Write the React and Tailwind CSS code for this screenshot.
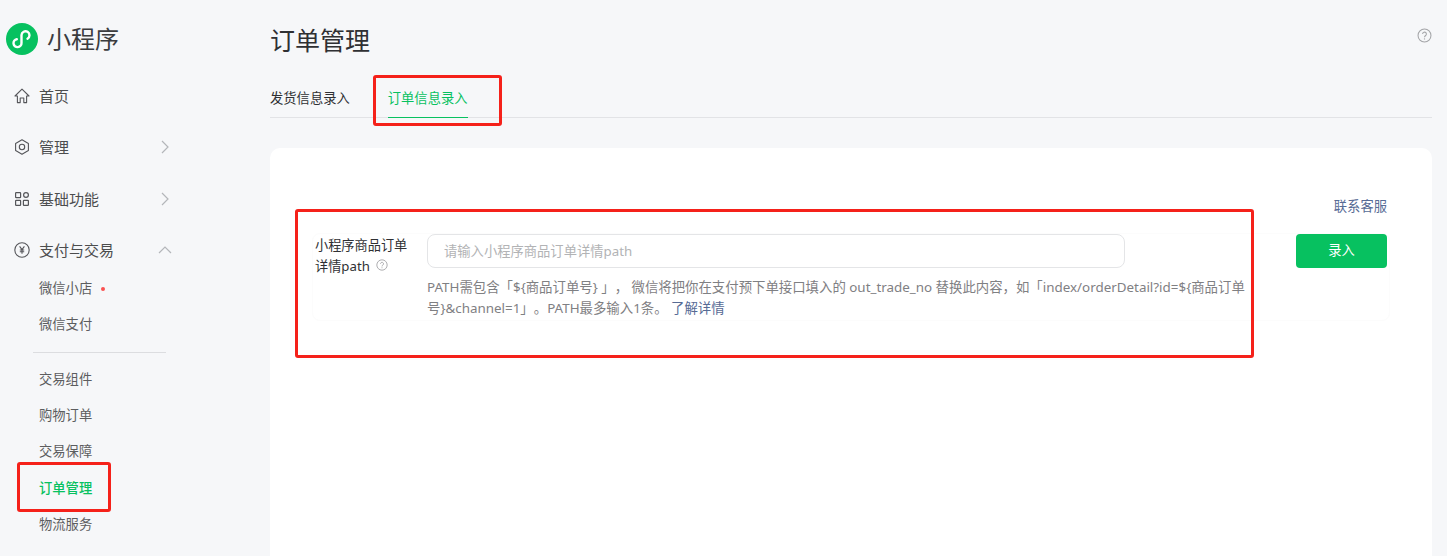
const HelpIcon = ({ className }) => (
  <svg viewBox="0 0 16 16" fill="none" stroke="currentColor" className={className}>
    <circle cx="8" cy="8" r="6.9" strokeWidth="1.1" />
    <path d="M6 6.4a2 2 0 1 1 3.2 1.6c-.8.6-1.2.9-1.2 1.9" strokeWidth="1.1" />
    <circle cx="8" cy="11.6" r=".7" fill="currentColor" stroke="none" />
  </svg>
);

const HomeIcon = () => (
  <svg viewBox="0 0 16 16" fill="none" stroke="currentColor" strokeWidth="1.1" className="w-4 h-4">
    <path d="M1 8 8 1.2 15 8h-2.4v6.6H9.8V10H6.2v4.6H3.4V8Z" strokeLinejoin="round" />
  </svg>
);

const ManageIcon = () => (
  <svg viewBox="0 0 16 16" fill="none" stroke="currentColor" strokeWidth="1.1" className="w-4 h-4">
    <path d="M8 .8 14.4 4.4v7.2L8 15.2 1.6 11.6V4.4Z" strokeLinejoin="round" />
    <circle cx="8" cy="8" r="2.7" />
  </svg>
);

const GridIcon = () => (
  <svg viewBox="0 0 16 16" fill="none" stroke="currentColor" strokeWidth="1.2" className="w-4 h-4">
    <rect x="1.6" y="1.6" width="5" height="5" rx=".6" />
    <circle cx="12" cy="4" r="2.4" />
    <rect x="1.6" y="9.4" width="5" height="5" rx=".6" />
    <rect x="9.4" y="9.4" width="5" height="5" rx=".6" />
  </svg>
);

const PayIcon = () => (
  <svg viewBox="0 0 16 16" fill="none" stroke="currentColor" strokeWidth="1.1" className="w-4 h-4">
    <circle cx="8" cy="8" r="7.2" />
    <path d="M5.6 4.4 8 7.6l2.4-3.2M8 7.6v4.2M5.8 8h4.4M5.8 9.8h4.4" />
  </svg>
);

const Chevron = ({ up }) => (
  <svg viewBox="0 0 14 14" fill="none" stroke="#b4b6ba" strokeWidth="1.2" className="w-[14px] h-[14px]">
    <path d={up ? "M1 10 7 4l6 6" : "M4 1l6 6-6 6"} />
  </svg>
);

const Logo = () => (
  <svg viewBox="0 0 32 32" className="w-8 h-8">
    <circle cx="16" cy="16" r="16" fill="#07c160" />
    <path
      d="M10.8 16.2A4 4 0 1 0 15.5 20V12A4 4 0 1 1 21.5 15.7"
      fill="none"
      stroke="#fff"
      strokeWidth="2.4"
      strokeLinecap="round"
    />
  </svg>
);

const MainItem = ({ icon, label, open, chevron }) => (
  <div className="h-[51.5px] flex items-center pl-[14px] pr-[98px] text-[15px] text-[#4c4d4e]">
    <span className="w-[25px] text-[#55565a]">{icon}</span>
    <span className="flex-1">{label}</span>
    {chevron && <Chevron up={open} />}
  </div>
);

const SubItem = ({ label, active, dot }) => (
  <div className={`h-[36.3px] flex items-center pl-[39px] text-[13.3px] ${active ? "text-[#07c160] font-medium" : "text-[#5c5d5f]"}`}>
    {label}
    {dot && <span className="ml-[9px] w-1 h-1 rounded-full bg-[#fa5151]" />}
  </div>
);

const RedBox = ({ className }) => (
  <div className={`absolute border-[3px] border-[#f5211a] rounded-[3px] pointer-events-none ${className}`} />
);

export default function App() {
  return (
    <div className="relative h-[556px] overflow-hidden flex bg-[#f6f7f9] font-['Noto_Sans','Noto_Sans_CJK_SC',sans-serif]">
      <aside className="w-[270px] shrink-0">
        <div className="h-[70px] pt-[23px] pl-[6px] flex items-start gap-[9px]">
          <Logo />
          <span className="text-[24px] leading-[32px] text-[#3b3c3e]">小程序</span>
        </div>
        <MainItem icon={<HomeIcon />} label="首页" />
        <MainItem icon={<ManageIcon />} label="管理" chevron />
        <MainItem icon={<GridIcon />} label="基础功能" chevron />
        <MainItem icon={<PayIcon />} label="支付与交易" chevron open />
        <div className="-mt-[5px]">
          <SubItem label="微信小店" dot />
          <SubItem label="微信支付" />
          <div className="mx-[33px] w-[133px] mt-[8px] mb-[9px] border-t border-[#dcdde0]" />
          <SubItem label="交易组件" />
          <SubItem label="购物订单" />
          <SubItem label="交易保障" />
          <SubItem label="订单管理" active />
          <SubItem label="物流服务" />
        </div>
      </aside>

      <main className="flex-1 pr-[15px]">
        <div className="flex justify-between">
          <h1 className="pt-[21px] text-[25px] leading-[38px] font-normal text-[#2f3033]">订单管理</h1>
          <HelpIcon className="w-[15px] h-[15px] mt-[28px] text-[#a3a4a7]" />
        </div>
        <div className="mt-[20px] h-[39px] flex gap-[38px] border-b border-[#e2e3e6] text-[13.3px]">
          <div className="leading-[38px] text-[#2f3033]">发货信息录入</div>
          <div className="h-[39px] leading-[38px] text-[#07c160] border-b border-[#07c160]">订单信息录入</div>
        </div>

        <section className="mt-[30px] h-[420px] bg-white rounded-t-[10px] pt-[49px] pr-[45px] pl-[45px]">
          <div className="text-right text-[13.3px] leading-[18px] text-[#576b95]">联系客服</div>
          <div className="mt-[18px] -mx-[3px] pl-[2px] pr-[2px] pb-[1px] flex rounded-lg border border-[#fcfcfc]">
            <div className="w-[112px] shrink-0 pt-[1px] text-[13.2px] leading-[21px] text-[#2f3033]">
              <div>小程序商品订单</div>
              <div className="flex items-center">
                详情path
                <HelpIcon className="ml-[6px] w-[12px] h-[12px] -mt-[3px] text-[#9b9c9f]" />
              </div>
            </div>
            <div className="flex-1 min-w-0">
              <div className="flex items-start justify-between">
                <input
                  readOnly
                  placeholder="请输入小程序商品订单详情path"
                  className="w-[698px] h-[34px] px-4 rounded-[8px] border border-[#e4e5e7] bg-white text-[13.3px] placeholder:text-[#b2b3b5] outline-none"
                />
                <button className="w-[91px] h-[34px] rounded-[4px] bg-[#07c160] text-white text-[13.3px]">录入</button>
              </div>
              <p className="mt-[9px] w-[820px] text-[13.4px] leading-[21px] text-[#7f8083] [text-spacing-trim:space-all]">
                PATH需包含「${"{"}商品订单号} 」， 微信将把你在支付预下单接口填入的 out_trade_no 替换此内容，如「index/orderDetail?id=${"{"}商品订单号}&amp;channel=1」。PATH最多输入1条。 <span className="text-[#576b95]">了解详情</span>
              </p>
            </div>
          </div>
        </section>
      </main>

      <RedBox className="left-[17px] top-[462px] w-[94px] h-[50px]" />
      <RedBox className="left-[373px] top-[75px] w-[129px] h-[51px]" />
      <RedBox className="left-[295px] top-[209px] w-[959px] h-[149px]" />
    </div>
  );
}
